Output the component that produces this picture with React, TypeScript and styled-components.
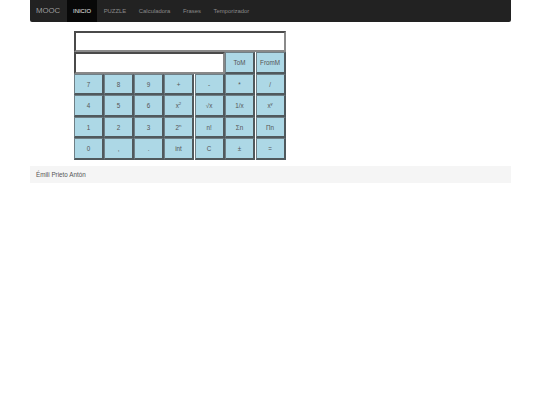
import { createGlobalStyle, styled } from "styled-components";

const GlobalStyle = createGlobalStyle`
    html, body {
        margin: 0;
        background: #fff;
        font-family: "Liberation Sans", Arial, sans-serif;
        color: #333;
    }
`;

const Page = styled.div`
    width: 481px;
    margin-left: 29.5px;
`;

const NavBar = styled.nav`
    height: 22px;
    display: flex;
    align-items: stretch;
    background: #222;
    border-radius: 0 0 2px 2px;
    box-sizing: border-box;
`;

const Brand = styled.div`
    padding: 0 6.5px;
    font-size: 7.8px;
    line-height: 22px;
    color: #9d9d9d;
`;

const NavLink = styled.a<{ $active?: boolean }>`
    padding: 0 6.3px;
    font-size: 5.9px;
    line-height: 22px;
    color: ${(p) => (p.$active ? "#eee" : "#8a8a8a")};
    background: ${(p) => (p.$active ? "#080808" : "transparent")};
`;

const CalcWrap = styled.div`
    margin: 8.5px 0 0 44.5px;
    width: 212px;
`;

const Display = styled.input`
    display: block;
    box-sizing: border-box;
    width: 212px;
    height: 21.5px;
    margin: 0;
    padding: 0;
    background: #fff;
    border: 2px solid;
    border-color: #4a4a4a #8a8a8a #8a8a8a #4a4a4a;
`;

const Keys = styled.div`
    display: grid;
    grid-template-columns: 30px 30px 30px 30.6px 30.4px 30.6px 30.4px;
    grid-auto-rows: 21.5px;
    margin-top: 0.3px;
`;

const Memory = styled.input`
    grid-column: span 5;
    box-sizing: border-box;
    width: 151px;
    height: 21.5px;
    margin: 0;
    padding: 0;
    background: #fff;
    border: 2px solid;
    border-color: #4a4a4a #888 #888 #4a4a4a;
`;

const Key = styled.button`
    box-sizing: border-box;
    width: 30px;
    height: 21.5px;
    margin: 0;
    padding: 0;
    background: #add8e6;
    border-style: solid;
    border-width: 1px 2px 2px 1px;
    border-color: #6f7f86 #50595d #50595d #6f7f86;
    font-family: inherit;
    font-size: 6.3px;
    color: #555;
    sup {
        font-size: 4.4px;
        line-height: 0;
    }
`;

const Footer = styled.footer`
    margin-top: 6px;
    height: 17px;
    padding: 0 6.5px;
    background: #f5f5f5;
    font-size: 6.3px;
    line-height: 17px;
    color: #555;
`;

const rows: React.ReactNode[][] = [
    ["7", "8", "9", "+", "-", "*", "/"],
    ["4", "5", "6", <>x<sup>2</sup></>, "√x", "1/x", <>x<sup>y</sup></>],
    ["1", "2", "3", <>2<sup>n</sup></>, "n!", "Σn", "Πn"],
    ["0", ",", ".", "int", "C", "±", "="],
];

export default function App() {
    return (
        <>
            <GlobalStyle />
            <Page>
                <NavBar>
                    <Brand>MOOC</Brand>
                    <NavLink $active>INICIO</NavLink>
                    <NavLink>PUZZLE</NavLink>
                    <NavLink>Calculadora</NavLink>
                    <NavLink>Frases</NavLink>
                    <NavLink>Temporizador</NavLink>
                </NavBar>
                <CalcWrap>
                    <Display readOnly />
                    <Keys>
                        <Memory readOnly />
                        <Key>ToM</Key>
                        <Key>FromM</Key>
                        {rows.flat().map((label, i) => (
                            <Key key={i}>{label}</Key>
                        ))}
                    </Keys>
                </CalcWrap>
                <Footer>Émili Prieto Antón</Footer>
            </Page>
        </>
    );
}
